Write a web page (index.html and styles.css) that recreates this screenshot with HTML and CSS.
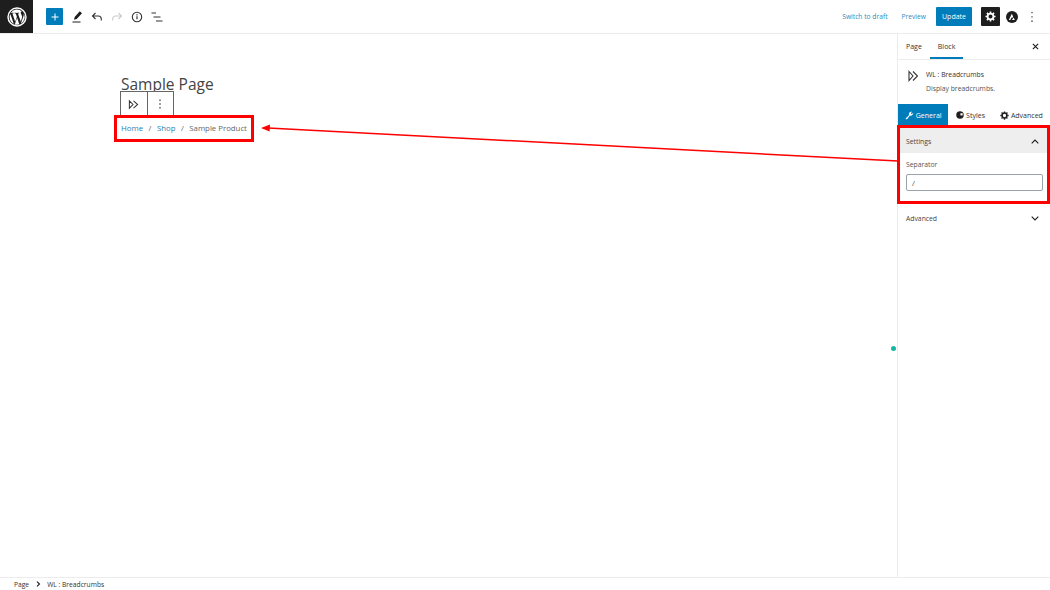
FILE: index.html
```html
<!DOCTYPE html>
<html lang="en">
<head>
    <meta charset="UTF-8">
    <title>Edit Page</title>
    <link rel="stylesheet" href="styles.css">
</head>
<body>

<div class="editor">
    <header class="topbar">
        <div class="topbar-left">
            <div class="wp-logo">
                <svg width="20" height="20" viewBox="0 0 20 20"><circle cx="10" cy="10" r="9" fill="none" stroke="#fff" stroke-width="1.4"/><path fill="#fff" d="M2.6 10a7.4 7.4 0 0 0 4.2 6.7L3.3 7A7.400 7.400 0 0 0 2.600 10zM15 9.600c0-.9-.3-1.600-.6-2.100-.4-.6-.7-1.100-.7-1.700 0-.7.5-1.300 1.200-1.300h.1A7.400 7.400 0 0 0 3.800 5.900h.5c.8 0 2-.1 2-.1.4 0 .4.600 0 .6 0 0-.4.100-.9.100l2.800 8.200 1.700-5-1.200-3.200c-.4 0-.8-.1-.8-.1-.4 0-.4-.7 0-.6 0 0 1.300.1 2 .1.800 0 2-.1 2-.1.400 0 .4.600 0 .6 0 0-.4.100-.9.100l2.800 8.200.8-2.600c.3-1.100.6-1.900.6-2.500zM10.100 10.700l-2.300 6.700a7.400 7.400 0 0 0 4.600-.1l-.1-.1zM16.700 6.400l.1.800c0 .8-.1 1.600-.6 2.800l-2.300 6.500a7.400 7.400 0 0 0 2.800-10.100z"/></svg>
            </div>
            <button class="add-btn">
                <svg width="10" height="10" viewBox="0 0 10 10"><path d="M5 1.500v7M1.500 5h7" stroke="#fff" stroke-width="1" fill="none"/></svg>
            </button>
            <svg class="tool-icon" width="14" height="14" viewBox="0 0 14 14"><path fill="#1e1e1e" d="M9.800 1.200l2.200 2-5.300 5.700-2.700.8.700-2.800zM2.500 11.500h8v1h-8z"/></svg>
            <svg class="tool-icon" width="14" height="14" viewBox="0 0 14 14"><path fill="none" stroke="#333" stroke-width="1.100" d="M5.500 3L2.500 6l3 3M2.800 6h5.500c2 0 3 1.300 3 3v1.500"/></svg>
            <svg class="tool-icon" width="14" height="14" viewBox="0 0 14 14"><path fill="none" stroke="#ccc" stroke-width="1.100" d="M8.500 3l3 3-3 3M11.200 6H5.700c-2 0-3 1.300-3 3v1.500"/></svg>
            <svg class="tool-icon" width="14" height="14" viewBox="0 0 14 14"><circle cx="7" cy="7" r="4.700" fill="none" stroke="#333" stroke-width="1.100"/><path d="M7 6.200v3M7 4.300v1.100" stroke="#333" stroke-width="1.200"/></svg>
            <svg class="tool-icon" width="14" height="14" viewBox="0 0 14 14"><path d="M1.500 3h4.500M3.500 7h7M6 11h6.500" stroke="#333" stroke-width="1.100" fill="none"/></svg>
        </div>
        <div class="topbar-right">
            <a class="top-link draft-link">Switch to draft</a>
            <a class="top-link preview-link">Preview</a>
            <button class="update-btn">Update</button>
            <button class="settings-btn">
                <svg width="11" height="11" viewBox="0 0 12 12"><circle cx="6" cy="6" r="3.200" fill="none" stroke="#fff" stroke-width="2"/><path d="M6 .5v2M6 9.500v2M.5 6h2M9.500 6h2M2.100 2.100l1.400 1.400M8.500 8.500l1.400 1.400M2.100 9.900l1.400-1.400M8.500 3.500l1.400-1.400" stroke="#fff" stroke-width="1.800"/></svg>
            </button>
            <span class="astra-icon">
                <svg width="12" height="12" viewBox="0 0 12 12"><circle cx="6" cy="6" r="6" fill="#1e1e1e"/><path d="M2.800 9L5.800 2.800 7.200 5.800 5.800 7.200 5.400 6.300 4.400 9zM7.600 6.600L8.800 9H6.400L6.200 8.500z" fill="#fff"/></svg>
            </span>
            <svg class="more-icon" width="4" height="12" viewBox="0 0 4 12"><path d="M2 1v1.300M2 5.300v1.300M2 9.600V11" stroke="#333" stroke-width="1.200"/></svg>
        </div>
    </header>

    <div class="workspace">
        <main class="canvas">
            <h1 class="page-title">Sample Page</h1>
            <div class="block-toolbar">
                <div class="toolbar-cell">
                    <svg width="11" height="11" viewBox="0 0 12 12"><path d="M1.500 2l4 4-4 4zM6 2l4.500 4L6 10" fill="none" stroke="#333" stroke-width="1.100"/></svg>
                </div>
                <div class="toolbar-cell">
                    <svg width="4" height="12" viewBox="0 0 4 12"><path d="M2 1.500V3M2 5.300v1.500M2 9v1.500" stroke="#333" stroke-width="1.200"/></svg>
                </div>
            </div>
            <nav class="breadcrumbs">
                <a>Home</a><span class="crumb-sep">/</span><a>Shop</a><span class="crumb-sep">/</span><span>Sample Product</span>
            </nav>
        </main>

        <aside class="sidebar">
            <div class="side-tabs">
                <span class="side-tab">Page</span>
                <span class="side-tab active">Block</span>
                <svg class="close-icon" width="7" height="7" viewBox="0 0 8 8"><path d="M1 1l6 6M7 1L1 7" stroke="#1e1e1e" stroke-width="1.300"/></svg>
            </div>
            <div class="block-card">
                <svg class="block-card-icon" width="10" height="12" viewBox="0 0 10 12"><path d="M1 1.500l4 4.500-4 4.500zM5 1.500L9.500 6 5 10.500" fill="none" stroke="#333" stroke-width="1.100"/></svg>
                <div>
                    <div class="block-name">WL : Breadcrumbs</div>
                    <div class="block-desc">Display breadcrumbs.</div>
                </div>
            </div>
            <div class="panel-tabs">
                <div class="panel-tab selected">
                    <svg width="9" height="9" viewBox="0 0 9 9"><path d="M.8 7.300L4 4.200c-.4-1.300.1-3 2-3.400.5-.1 1 0 1.200 0L5.700 2.300l1 1 1.500-1.500c.2 1.800-1.400 3.300-3.200 2.800L2 8.200c-.7.500-1.800-.2-1.200-.9z" fill="#fff"/></svg>
                    General
                </div>
                <div class="panel-tab">
                    <svg width="8" height="8" viewBox="0 0 9 9"><circle cx="4.500" cy="4.500" r="4.200" fill="#1e1e1e"/><path d="M5 2.500h2.500v2.500H5z" fill="#fff"/></svg>
                    Styles
                </div>
                <div class="panel-tab">
                    <svg width="9" height="9" viewBox="0 0 12 12"><circle cx="6" cy="6" r="3.200" fill="none" stroke="#1e1e1e" stroke-width="2"/><path d="M6 .5v2M6 9.500v2M.5 6h2M9.500 6h2M2.100 2.100l1.400 1.400M8.500 8.500l1.400 1.400M2.100 9.900l1.400-1.400M8.500 3.500l1.400-1.400" stroke="#1e1e1e" stroke-width="1.800"/></svg>
                    Advanced
                </div>
            </div>
            <div class="panel-head open">
                <span>Settings</span>
                <svg width="8" height="5" viewBox="0 0 8 5"><path d="M.7 4.300L4 1l3.300 3.300" fill="none" stroke="#1e1e1e" stroke-width="1.100"/></svg>
            </div>
            <div class="panel-body">
                <label class="field-label">Separator</label>
                <div class="field-input">/</div>
            </div>
            <div class="panel-head">
                <span>Advanced</span>
                <svg width="8" height="5" viewBox="0 0 8 5"><path d="M.7.700L4 4 7.300.700" fill="none" stroke="#1e1e1e" stroke-width="1.100"/></svg>
            </div>
        </aside>
    </div>

    <footer class="statusbar">
        <span>Page</span>
        <svg width="5" height="6" viewBox="0 0 5 6"><path d="M1 .7L3.500 3 1 5.300" fill="none" stroke="#1e1e1e" stroke-width="1.100"/></svg>
        <span>WL : Breadcrumbs</span>
    </footer>
</div>

<!-- Annotations drawn over the screenshot -->
<div class="mark mark-crumbs"></div>
<div class="mark mark-settings"></div>
<svg class="arrow" width="1050" height="590" viewBox="0 0 1050 590">
    <path d="M898 161L268 128" stroke="#f00" stroke-width="1.500" fill="none"/>
    <path d="M261 128l9-3.500-.4 7z" fill="#f00"/>
</svg>
<div class="dot"></div>

</body>
</html>
```

FILE: styles.css
```css
* {
    box-sizing: border-box;
}
html, body {
    margin: 0;
    height: 100%;
    overflow: hidden;
}
body {
    font-family: "Open Sans", sans-serif;
    font-size: 8px;
    color: #333;
    background-color: #fff;
}
svg {
    display: block;
}
.editor {
    display: flex;
    flex-direction: column;
    height: 590px;
}

/* Top bar */
.topbar {
    display: flex;
    justify-content: space-between;
    align-items: center;
    height: 34px;
    border-bottom: 1px solid #ececec;
}
.topbar-left, .topbar-right {
    display: flex;
    align-items: center;
}
.wp-logo {
    display: flex;
    align-items: center;
    justify-content: center;
    width: 33px;
    height: 33px;
    background-color: #1e1e1e;
}
.add-btn {
    display: flex;
    align-items: center;
    justify-content: center;
    width: 17px;
    height: 17px;
    margin: 0 7px 0 13px;
    padding: 0;
    border: none;
    border-radius: 1px;
    background-color: #007cba;
}
.tool-icon {
    margin-right: 6px;
}
.top-link {
    color: #2a8cc0;
    font-size: 6.700px;
}
.draft-link {
    margin-right: 14px;
}
.preview-link {
    margin-right: 10px;
}
.update-btn {
    width: 36px;
    height: 19px;
    padding: 0;
    border: none;
    border-radius: 1px;
    background-color: #007cba;
    color: #fff;
    font-family: inherit;
    font-size: 7px;
}
.settings-btn {
    display: flex;
    align-items: center;
    justify-content: center;
    width: 19px;
    height: 19px;
    margin-left: 9px;
    padding: 0;
    border: none;
    border-radius: 1px;
    background-color: #1e1e1e;
}
.astra-icon {
    margin-left: 6px;
}
.more-icon {
    margin: 0 16px 0 12px;
}

/* Main area */
.workspace {
    flex: 1;
    display: flex;
    min-height: 0;
}
.canvas {
    flex: 1;
    padding: 40px 0 0 121px;
}
.page-title {
    margin: 0;
    height: 17px;
    font-size: 15.500px;
    font-weight: 400;
    line-height: 20px;
    color: #444;
}
.block-toolbar {
    display: flex;
    width: 54px;
    height: 25px;
    margin-left: -1px;
    border: 1px solid #666;
    border-bottom-width: 0;
    background-color: #fff;
    position: relative;
}
.toolbar-cell {
    display: flex;
    align-items: center;
    justify-content: center;
    flex: 1;
}
.toolbar-cell + .toolbar-cell {
    border-left: 1px solid #666;
}
.breadcrumbs {
    display: flex;
    margin-top: 6px;
    font-size: 7.800px;
    line-height: 12px;
    color: #666;
}
.breadcrumbs a {
    color: #2a80b0;
}
.crumb-sep {
    margin: 0 5.500px;
}

/* Sidebar */
.sidebar {
    width: 153px;
    border-left: 1px solid #ececec;
}
.side-tabs {
    position: relative;
    display: flex;
    height: 26px;
    border-bottom: 1px solid #ececec;
}
.side-tab {
    display: flex;
    align-items: center;
    padding: 0 8px;
    font-size: 7px;
}
.side-tab.active {
    border-bottom: 2px solid #007cba;
    padding-top: 2px;
}
.close-icon {
    position: absolute;
    right: 11px;
    top: 9px;
}
.block-card {
    display: flex;
    gap: 8px;
    height: 44px;
    padding: 10px 0 0 10px;
    font-size: 7px;
}
.block-name {
    font-size: 6.800px;
    font-weight: 500;
    line-height: 10px;
}
.block-desc {
    margin-top: 4px;
    font-size: 6.800px;
    line-height: 10px;
    color: #555;
}
.panel-tabs {
    display: flex;
    height: 22px;
}
.panel-tab {
    display: flex;
    align-items: center;
    justify-content: center;
    gap: 2px;
    width: 49px;
    font-size: 7px;
}
.panel-tab + .panel-tab {
    width: 45px;
}
.panel-tab:last-child {
    width: 58px;
}
.panel-tab.selected {
    width: 51px;
    background-color: #007cba;
    color: #fff;
    font-weight: 500;
}
.panel-head {
    display: flex;
    justify-content: space-between;
    align-items: center;
    height: 32px;
    padding: 0 11px 0 8px;
    font-size: 6.800px;
    font-weight: 500;
    color: #444;
}
.panel-head.open {
    height: 27px;
    padding-top: 3px;
    background-color: #eee;
}
.panel-body {
    height: 49px;
    padding: 7px 7px 0 8px;
    font-size: 6.800px;
}
.field-label {
    display: block;
    line-height: 10px;
    color: #555;
}
.field-input {
    height: 17px;
    margin-top: 4px;
    padding-left: 5px;
    border: 1px solid #9aa2aa;
    border-radius: 2px;
    font-size: 8px;
    line-height: 16px;
    color: #555;
}

/* Status bar */
.statusbar {
    display: flex;
    align-items: center;
    gap: 6.500px;
    height: 13px;
    padding-left: 14px;
    border-top: 1px solid #ececec;
    font-size: 6.700px;
}

/* Annotations */
.mark {
    position: absolute;
    border: 3px solid #f00;
}
.mark-crumbs {
    left: 114px;
    top: 115px;
    width: 140px;
    height: 27px;
}
.mark-settings {
    left: 897px;
    top: 125px;
    width: 153px;
    height: 79px;
}
.arrow {
    position: absolute;
    left: 0;
    top: 0;
    pointer-events: none;
}
.dot {
    position: absolute;
    left: 891px;
    top: 346px;
    width: 5px;
    height: 5px;
    border-radius: 50%;
    background-color: #14b8a0;
}
```
